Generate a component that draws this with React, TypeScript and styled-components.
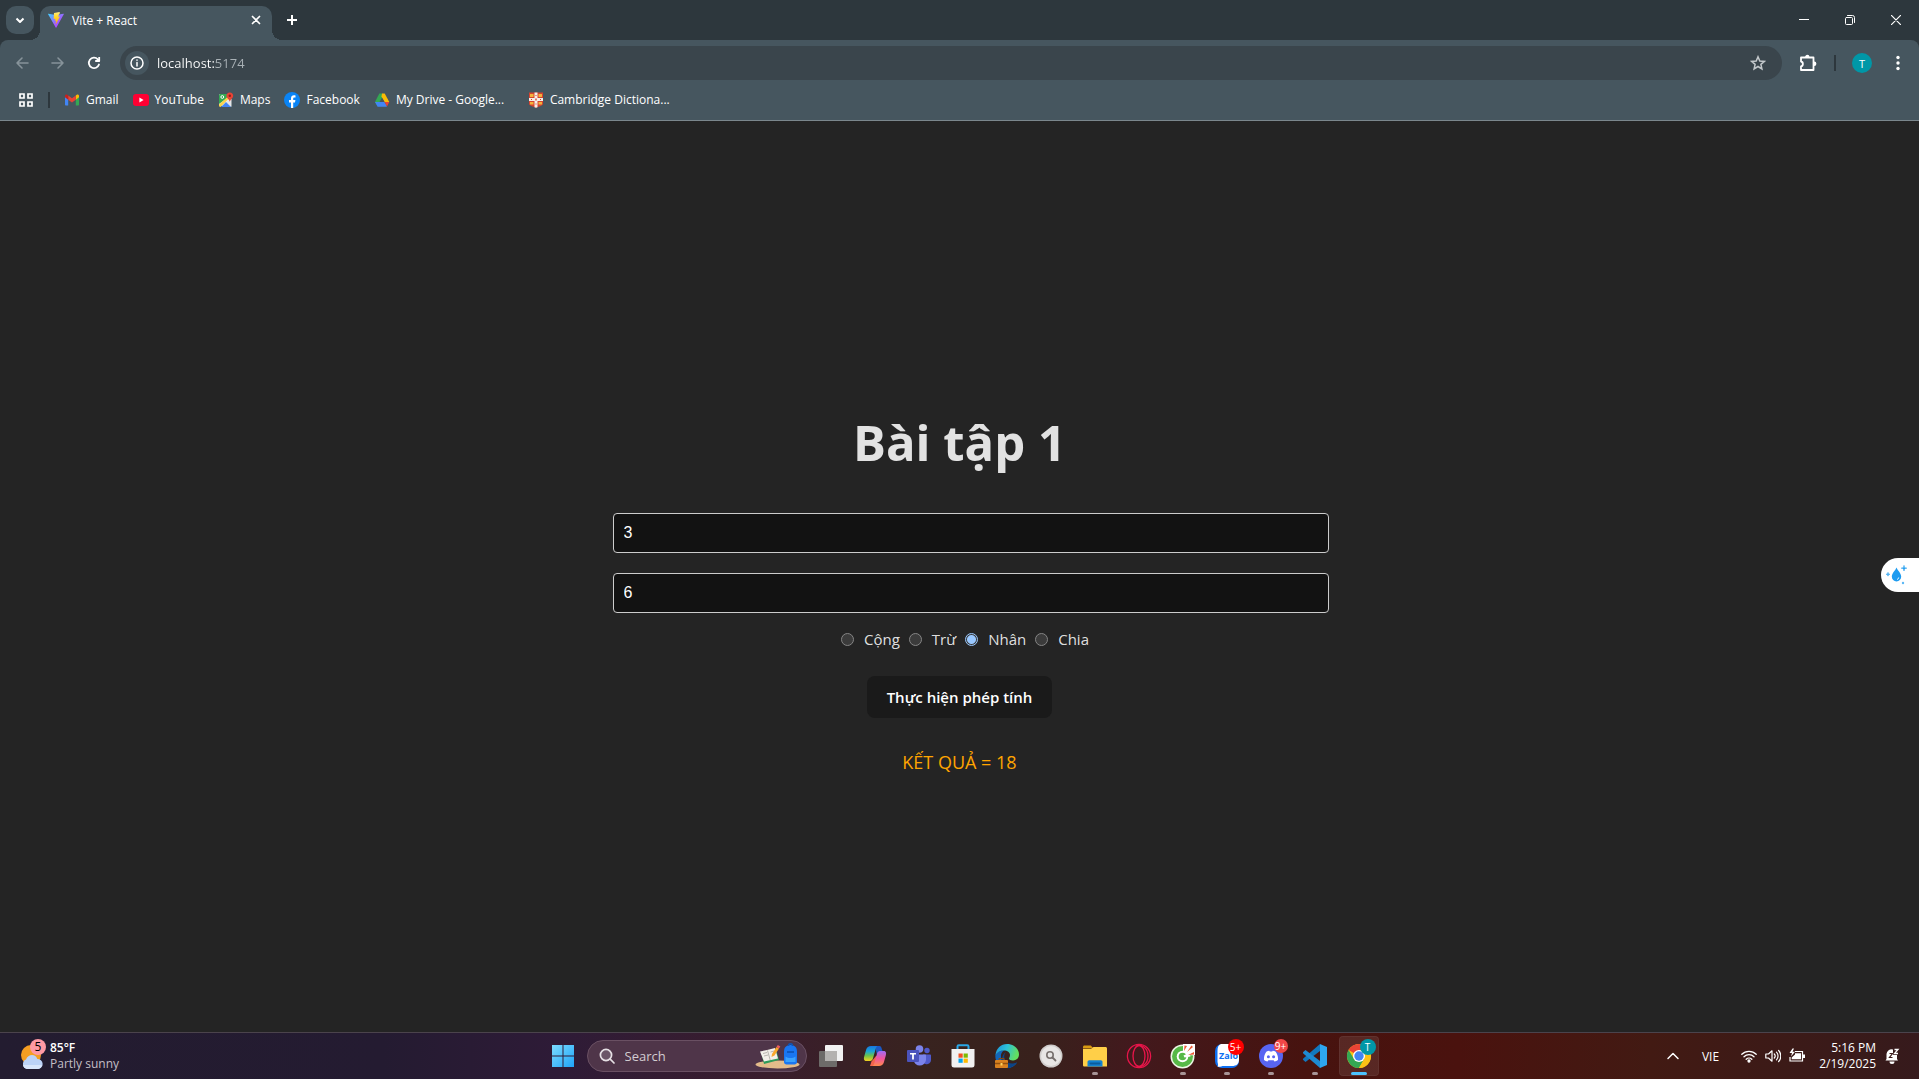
import React, { useState } from "react";
import styled, { createGlobalStyle } from "styled-components";

const GlobalStyle = createGlobalStyle`
  *, *::before, *::after { box-sizing: border-box; }
  html, body { margin: 0; height: 100%; }
  #root { height: 100%; }
  body { background: #242424; font-family: "Open Sans", "Noto Sans", sans-serif; }
  button, input { font-family: inherit; }
  svg { display: block; flex: none; }
`;

const Screen = styled.div`
  display: flex;
  flex-direction: column;
  min-height: 100vh;
  overflow: hidden;
`;

const PlainButton = styled.button`
  display: flex;
  align-items: center;
  justify-content: center;
  padding: 0;
  border: 0;
  background: transparent;
  color: #fff;
`;

/* ---------- browser window ---------- */

const TabStrip = styled.div`
  display: flex;
  align-items: flex-start;
  height: 40px;
  padding: 6px 0 0 6px;
  background: #2d373d;
`;

const TabSearch = styled(PlainButton)`
  width: 28px;
  height: 28px;
  margin-right: 6px;
  border-radius: 10px;
  background: #46565f;
`;

const Tab = styled.div`
  position: relative;
  display: flex;
  align-items: center;
  width: 232px;
  height: 34px;
  padding: 0 8px 6px;
  border-radius: 10px 10px 0 0;
  background: #46565f;
  color: #fff;
  font-size: 12px;
  line-height: 16px;

  &::before,
  &::after {
    content: "";
    position: absolute;
    bottom: 0;
    width: 10px;
    height: 10px;
  }
  &::before {
    left: -10px;
    background: radial-gradient(circle at 0 0, transparent 10px, #46565f 10px);
  }
  &::after {
    right: -10px;
    background: radial-gradient(circle at 100% 0, transparent 10px, #46565f 10px);
  }
`;

const TabTitle = styled.span`
  flex: 1;
  margin-left: 8px;
  padding-top: 2px;
`;

const TabClose = styled(PlainButton)`
  width: 16px;
  height: 16px;
`;

const NewTab = styled(PlainButton)`
  width: 28px;
  height: 28px;
  margin-left: 6px;
`;

const WindowControls = styled.div`
  display: flex;
  margin-left: auto;
`;

const WindowButton = styled(PlainButton)`
  width: 46px;
  height: 28px;
`;

const ToolbarBack = styled.div`
  background: #2d373d;
`;

const Toolbar = styled.div`
  display: flex;
  align-items: center;
  height: 46px;
  padding: 0 3px 0 4px;
  border-radius: 8px 8px 0 0;
  background: #46565f;
`;

const ToolButton = styled(PlainButton)<{ $dim?: boolean }>`
  width: 36px;
  height: 34px;
  color: ${(p) => (p.$dim ? "#87939a" : "#fff")};
`;

const AddressBar = styled.div`
  display: flex;
  align-items: center;
  flex: 1;
  height: 34px;
  margin: 0 8px;
  padding: 0 16px 0 5px;
  border-radius: 17px;
  background: #3a454c;
`;

const SiteInfo = styled(PlainButton)`
  width: 24px;
  height: 24px;
  border-radius: 12px;
  background: #46565f;
`;

const AddressInput = styled.input`
  flex: 1;
  height: 24px;
  margin: 0 8px;
  padding: 0;
  border: 0;
  outline: 0;
  background: linear-gradient(90deg, #fff 59px, #a9b1b6 59px);
  background-clip: text;
  -webkit-background-clip: text;
  color: transparent;
  font-size: 13px;
`;

const Divider = styled.span`
  width: 2px;
  height: 16px;
  background: #2d373d;
`;

const ProfileArea = styled.div`
  display: flex;
  align-items: center;
  gap: 16px;
  margin: 0 8px;
`;

const Avatar = styled(PlainButton)`
  width: 20px;
  height: 20px;
  border-radius: 10px;
  background: #0097a7;
  font-size: 11px;
`;

const Bookmarks = styled.nav`
  display: flex;
  align-items: center;
  height: 35px;
  padding: 0 0 6px 18px;
  border-bottom: 1px solid #7b878d;
  background: #46565f;
`;

const AppsButton = styled(PlainButton)`
  width: 16px;
  height: 16px;
  margin-right: 14px;
`;

const BookmarkList = styled.div`
  display: flex;
  gap: 14px;
  margin-left: 14px;
`;

const Bookmark = styled.a<{ $wide?: boolean }>`
  display: flex;
  align-items: center;
  gap: 6px;
  min-width: ${(p) => (p.$wide ? "140px" : "0")};
  color: #fff;
  font-size: 12px;
  line-height: 16px;
  text-decoration: none;
  white-space: nowrap;
`;

/* ---------- page ---------- */

const Page = styled.main`
  position: relative;
  display: flex;
  flex: 1;
  flex-direction: column;
  align-items: center;
  justify-content: center;
  padding-top: 35px;
  background: #242424;
  color: rgba(255, 255, 255, 0.87);
`;

const Title = styled.h1`
  margin: 0 0 43px;
  font-size: 49px;
  line-height: 56px;
  font-weight: 700;
`;

const Form = styled.form`
  display: flex;
  flex-direction: column;
  width: 694px;
  max-width: 90%;
`;

const NumberInput = styled.input`
  box-sizing: content-box;
  width: 100%;
  height: 18px;
  margin: 0 0 20px;
  padding: 10px;
  border: 1px solid #ccc;
  border-radius: 4px;
  outline: 0;
  background: #121212;
  color: #fff;
  font-family: "Liberation Sans", Arial, sans-serif;
  font-size: 16px;
`;

const Operations = styled.fieldset`
  display: flex;
  justify-content: center;
  margin: -6px 0 25px;
  padding: 0 0 0 20px;
  border: 0;
`;

const Operation = styled.label`
  display: flex;
  align-items: center;
  gap: 10px;
  margin-right: 9px;
  font-size: 15px;
  line-height: 24px;
`;

const Radio = styled.input`
  appearance: none;
  width: 13px;
  height: 13px;
  margin: 0;
  border: 1px solid #858585;
  border-radius: 50%;
  background: #3b3b3b;

  &:checked {
    border-color: #99c8ff;
    background: radial-gradient(circle, #99c8ff 4px, #3b3b3b 5px);
  }
`;

const Submit = styled.button`
  align-self: center;
  height: 42px;
  margin-bottom: 32px;
  padding: 0 20px;
  border: 0;
  border-radius: 8px;
  background: #1a1a1a;
  color: #fff;
  font-size: 15px;
  font-weight: 600;
`;

const Result = styled.output`
  align-self: center;
  color: #ffa500;
  font-size: 18px;
  line-height: 24px;
`;

const SideWidget = styled.button`
  position: absolute;
  top: 437px;
  right: 0;
  display: flex;
  align-items: center;
  width: 38px;
  height: 34px;
  padding: 0 0 0 4px;
  border: 0;
  border-radius: 17px 0 0 17px;
  background: #fff;
`;

/* ---------- taskbar ---------- */

const Taskbar = styled.footer`
  display: grid;
  grid-template-columns: 1fr auto 1fr;
  align-items: center;
  height: 47px;
  border-top: 1px solid #4b434c;
  background: linear-gradient(
    90deg,
    #231c30 0%,
    #241b31 20%,
    #2e1b37 29%,
    #3a1d2d 40%,
    #38231f 48%,
    #38211c 54%,
    #42191d 59%,
    #47130f 68%,
    #4a120e 76%,
    #421a13 86%,
    #361a1c 100%
  );
  color: #fff;
  font-size: 12px;
  line-height: 16px;
`;

const Weather = styled(PlainButton)`
  justify-self: start;
  gap: 5px;
  padding-left: 20px;
  font-size: 12px;
  line-height: 16px;
  text-align: left;
`;

const WeatherIcon = styled.span`
  position: relative;
  width: 25px;
  height: 32px;
`;

const WeatherBadge = styled.span`
  position: absolute;
  top: -1px;
  right: -1px;
  width: 16px;
  height: 16px;
  border-radius: 8px;
  background: #ff99a4;
  color: #000;
  text-align: center;
`;

const Temperature = styled.span`
  font-weight: 600;
`;

const Muted = styled.span`
  color: #c3bfc6;
`;

const Apps = styled.div`
  display: flex;
  align-items: center;
  padding-left: 2px;
`;

const SearchBox = styled.label`
  display: flex;
  align-items: center;
  width: 220px;
  height: 32px;
  margin: 0 2px;
  padding: 0 6px 0 11px;
  border: 1px solid #6a5063;
  border-radius: 16px;
  background: #4f3549;
`;

const SearchInput = styled.input`
  flex: 1;
  width: 0;
  margin-left: 10px;
  padding: 0;
  border: 0;
  outline: 0;
  background: transparent;
  color: #fff;
  font-size: 13px;

  &::placeholder {
    color: #d3ccd1;
    opacity: 1;
  }
`;

const AppButton = styled(PlainButton)<{ $active?: boolean; $running?: boolean }>`
  position: relative;
  width: 40px;
  height: 40px;
  margin: 0 2px;
  border-radius: 4px;
  background: ${(p) => (p.$active ? "rgba(255,255,255,0.09)" : "transparent")};
  box-shadow: ${(p) => (p.$active ? "inset 0 0 0 1px rgba(255,255,255,0.05)" : "none")};

  &::after {
    content: "";
    display: ${(p) => (p.$active || p.$running ? "block" : "none")};
    position: absolute;
    bottom: 1px;
    left: 50%;
    width: ${(p) => (p.$active ? "16px" : "6px")};
    height: 3px;
    border-radius: 2px;
    background: ${(p) => (p.$active ? "#4cc2ff" : "#a89496")};
    transform: translateX(-50%);
  }
`;

const AppBadge = styled.span<{ $color: string; $size: number }>`
  position: absolute;
  top: 3px;
  right: 3px;
  width: ${(p) => p.$size}px;
  height: ${(p) => p.$size}px;
  border-radius: 50%;
  background: ${(p) => p.$color};
  color: #fff;
  font-size: 10px;
  line-height: ${(p) => p.$size}px;
  text-align: center;
`;

const Tray = styled.div`
  display: flex;
  align-items: center;
  justify-self: end;
  padding-right: 19px;
`;

const Language = styled(PlainButton)`
  margin: 0 22px;
  font-size: 12px;
`;

const TrayStatus = styled(PlainButton)`
  gap: 8px;
`;

const Clock = styled.time`
  margin: 0 8px 0 14px;
  text-align: right;
  white-space: pre-line;
`;

/* ---------- small drawings ---------- */

const line = {
  fill: "none",
  stroke: "currentColor",
  strokeLinecap: "round" as const,
  strokeLinejoin: "round" as const,
};

const ViteLogo = () => (
  <svg width="16" height="16" viewBox="0 0 16 16">
    <defs>
      <linearGradient id="viteA" x1="0" y1="0" x2="1" y2="1">
        <stop offset="0" stopColor="#41d1ff" />
        <stop offset="0.6" stopColor="#a259ff" />
        <stop offset="1" stopColor="#bd34fe" />
      </linearGradient>
      <linearGradient id="viteB" x1="0" y1="0" x2="0" y2="1">
        <stop offset="0" stopColor="#ffea83" />
        <stop offset="0.3" stopColor="#ffdd35" />
        <stop offset="1" stopColor="#ffa800" />
      </linearGradient>
    </defs>
    <path d="M15.8 2.3 8.4 15.5c-.2.3-.6.3-.7 0L.1 2.3c-.2-.3.1-.6.4-.6L8 3l7.400-1.300c.3 0 .6.3.4.6Z" fill="url(#viteA)" />
    <path d="m11.500.1-5.500 1-.3 5.900 1.700-.3-.5 2.300 1.300-.4-.6 3.400c0 .3.300.3.400.1l3.900-7.500-1.700.2.900-3 1.100-.4Z" fill="url(#viteB)" />
  </svg>
);

const GmailLogo = () => (
  <svg width="16" height="16" viewBox="0 0 16 16">
    <path d="M1 4.500v8.300c0 .4.300.7.800.7h2.400V7.300L1 4.500Z" fill="#4285f4" />
    <path d="M15 4.500v8.300c0 .4-.300.7-.8.7h-2.400V7.300L15 4.500Z" fill="#34a853" />
    <path d="M11.800 3.400v4.300L15 5.300V4c0-1.300-1.300-1.900-2.300-1.200l-.9.600Z" fill="#fbbc04" />
    <path d="M4.200 7.700V3.400L8 6.300l3.800-2.900v4.300L8 10.600 4.200 7.700Z" fill="#ea4335" />
    <path d="M1 4v1.300l3.200 2.400V3.400l-.9-.6C2.300 2.100 1 2.700 1 4Z" fill="#c5221f" />
  </svg>
);

const YouTubeLogo = () => (
  <svg width="16" height="16" viewBox="0 0 16 16">
    <rect y="2" width="16" height="12" rx="3" fill="#ff0033" />
    <path d="m6.400 5.500 4.200 2.500-4.200 2.500Z" fill="#fff" />
  </svg>
);

const MapsLogo = () => (
  <svg width="16" height="16" viewBox="0 0 16 16">
    <path d="M1 13.500V3.500C1 2.600 1.600 2 2.500 2H10l3 5v6.500c0 .9-.6 1.500-1.500 1.500Z" fill="#f1f1f1" />
    <path d="M1 12V3.500C1 2.600 1.600 2 2.500 2h7l.5 3.500Z" fill="#34a853" />
    <path d="M1 12.500 10 4.500l1.500 1.500L2.500 15C1.600 15 1 14.400 1 13.500Z" fill="#fbd34b" />
    <path d="M13.500 7v7c0 .6-.2 1-.6 1L8.500 10.300 12 7Z" fill="#e4e6e8" />
    <path d="m3 15 5-5 5 5Z" fill="#4285f4" />
    <circle cx="4.300" cy="5" r="1.400" fill="none" stroke="#fff" />
    <path d="M11.800.5c2 0 3.400 1.500 3.400 3.300 0 2.300-2.600 3.200-3.400 6-.8-2.800-3.400-3.700-3.400-6C8.400 2 9.800.5 11.800.5Z" fill="#ea4335" />
    <circle cx="11.800" cy="3.800" r="1.200" fill="#8c1d18" />
  </svg>
);

const FacebookLogo = () => (
  <svg width="16" height="16" viewBox="0 0 16 16">
    <circle cx="8" cy="8" r="8" fill="#0a84f5" />
    <path d="M7 16v-5.500H5V8h2V6.500C7 4.300 8.200 3.200 10 3.200c.6 0 1.200.1 1.500.2v2h-1c-1 0-1.300.5-1.300 1.200V8h2.200l-.4 2.500H9.200V16Z" fill="#fff" />
  </svg>
);

const DriveLogo = () => (
  <svg width="16" height="16" viewBox="0 0 16 16">
    <path d="M5.300 1.500h2.900L10 4.800 3.500 14.500 1 10Z" fill="#34a853" />
    <path d="M8 1.500h2.700L15.300 10h-4.800L7.500 4.500Z" fill="#fbbc04" />
    <path d="M1 10h4.500l7.500 4.500H3.500Z" fill="#4285f4" />
    <path d="M5.500 10h5L13 14.500H3.500Z" fill="#4285f4" />
    <path d="M10.500 10h4.800l-2.300 4.500Z" fill="#ea4335" />
    <path d="m8 5.800 2.500 4.200h-5Z" fill="#46565f" />
  </svg>
);

const CambridgeLogo = () => (
  <svg width="16" height="16" viewBox="0 0 16 16">
    <path d="M1 .5h14v11.500c0 1.500-4 2.500-7 3.800-3-1.300-7-2.300-7-3.800Z" fill="#d6432f" />
    <path d="M2 2h3.500v3H2ZM10.500 2H14v3h-3.500ZM2 10h3.500v2.500H2ZM10.500 10H14v2.500h-3.500Z" fill="#f3b33c" />
    <path d="M6.500.5h3V6H15v3H9.500v6.200L8 15.800l-1.500-.6V9H1V6h5.500Z" fill="#f5efe9" />
    <path d="M7.300 6.600h1.400v1.800H7.300ZM3 7h1v1H3ZM12 7h1v1h-1ZM7.500 3h1v1h-1ZM7.500 11.500h1v1h-1Z" fill="#d6432f" />
  </svg>
);

const StartIcon = () => (
  <svg width="24" height="24" viewBox="0 0 24 24">
    <defs>
      <linearGradient id="win" x1="0" y1="0" x2="1" y2="1" gradientUnits="objectBoundingBox">
        <stop offset="0" stopColor="#7cdcff" />
        <stop offset="1" stopColor="#1fa4f8" />
      </linearGradient>
    </defs>
    <path d="M1 1h10.500v10.500H1ZM12.500 1H23v10.500H12.500ZM1 12.500h10.500V23H1ZM12.500 12.500H23V23H12.500Z" fill="url(#win)" />
  </svg>
);

const SchoolArt = () => (
  <svg width="45" height="26" viewBox="0 0 45 26">
    <ellipse cx="22.500" cy="21.500" rx="22" ry="4" fill="#e3bb8a" />
    <path d="m6 9 15-3 3 11-15 4Z" fill="#2e9b59" />
    <path d="M5 8.500 12 7l8-2 3 10.500-7 1.500-7 1.500Z" fill="#f4f0ea" />
    <path d="m12.500 7.500 2.700 9.500M8 10.500l4-1M9 13l4-1M15.500 9l3.500-1" stroke="#b9b6b0" fill="none" />
    <path d="m17 11 4.500-7 2.500 1.500-4.500 7-3 1.500Z" fill="#f9a72b" />
    <path d="m21.500 4 1.300-2 2.500 1.600L24 5.500Z" fill="#ef5d5d" />
    <path d="M29 9c0-5 2.500-7 6.500-7s6.500 2 6.500 7v10c0 1.500-1 2.500-2.500 2.500h-8c-1.500 0-2.500-1-2.500-2.500Z" fill="#1976f2" />
    <path d="M33.500 3c0-3 4-3 4 0" fill="none" stroke="#0d55b8" strokeWidth="1.500" />
    <path d="M30.500 13.500c3 2 7 2 10 0V19h-10Z" fill="#39a2ff" />
    <path d="M32 9h7" stroke="#0b4fb0" strokeWidth="1.500" />
  </svg>
);

const TaskViewIcon = () => (
  <svg width="26" height="24" viewBox="0 0 26 24">
    <rect x="7" y="1" width="18" height="16" rx="1" fill="#f2f2f2" />
    <rect x="1" y="7" width="18" height="16" rx="1" fill="#6d6b69" />
    <path d="M7 7h12v10H7Z" fill="#b4b2b0" />
  </svg>
);

const CopilotIcon = () => (
  <svg width="24" height="24" viewBox="0 0 24 24">
    <defs>
      <linearGradient id="copA" x1="0" y1="0" x2="0" y2="1">
        <stop offset="0" stopColor="#1976e0" />
        <stop offset="0.35" stopColor="#18a5d8" />
        <stop offset="0.65" stopColor="#6cc24a" />
        <stop offset="1" stopColor="#f5d21f" />
      </linearGradient>
      <linearGradient id="copB" x1="0" y1="0" x2="0" y2="1">
        <stop offset="0" stopColor="#a06bf5" />
        <stop offset="0.5" stopColor="#f0559e" />
        <stop offset="1" stopColor="#ff8a4a" />
      </linearGradient>
    </defs>
    <path d="M8.500 17.500 7 22h6.500c2 0 2.800-1.500 3.500-3.500L19 11l-6 1Z" fill="#f2644c" />
    <path d="M12 2h4.500c1.300 0 1.800 1 2.200 2.500l1 3L14 11Z" fill="#1b58c4" />
    <path d="M8 2h6.500c-1 .7-1.500 1.500-2 3.500l-2.500 8.800c-.5 1.700-1.400 2.700-3 2.700H3.500C1 17 .5 15 1.200 12.500l2-7C3.900 3.200 5.500 2 8 2Z" fill="url(#copA)" />
    <path d="M16 22H9.500c1-.7 1.500-1.500 2-3.500L14 9.700C14.500 8 15.400 7 17 7h3.500c2.500 0 3 2 2.300 4.500l-2 7c-.7 2.300-2.300 3.500-4.800 3.500Z" fill="url(#copB)" />
  </svg>
);

const TeamsIcon = () => (
  <svg width="24" height="24" viewBox="0 0 24 24">
    <circle cx="20" cy="6.500" r="2.700" fill="#5059c9" />
    <path d="M16 10.500h7c.6 0 1 .4 1 1v4.500a4.500 4.500 0 0 1-8 2.500Z" fill="#5059c9" />
    <circle cx="12.500" cy="5" r="3.800" fill="#7b83eb" />
    <path d="M6.500 10.500h11.500c.6 0 1 .4 1 1V16a6.300 6.300 0 0 1-12.500 0Z" fill="#7b83eb" />
    <rect y="6" width="12" height="12" rx="1" fill="#4b53bc" />
    <path d="M3 9h6v1.600H6.900V15.500H5.100V10.600H3Z" fill="#fff" />
  </svg>
);

const StoreIcon = () => (
  <svg width="24" height="24" viewBox="0 0 24 24">
    <path d="M6.500 6V2.500c0-.8.500-1.300 1.300-1.300h8.400c.8 0 1.300.5 1.300 1.300V6" fill="none" stroke="#2aa8e8" strokeWidth="2" />
    <path d="M.5 5h23v16c0 1.700-1 2.500-2.500 2.500H3C1.500 23.500.5 22.700.5 21Z" fill="#f1f1f1" />
    <path d="M7.500 9.500h4.200v4.200H7.500Z" fill="#f25022" />
    <path d="M12.600 9.500h4.200v4.200h-4.200Z" fill="#7fba00" />
    <path d="M7.500 14.600h4.200v4.200H7.500Z" fill="#00a4ef" />
    <path d="M12.600 14.600h4.200v4.200h-4.200Z" fill="#ffb900" />
  </svg>
);

const EdgeIcon = () => (
  <svg width="26" height="26" viewBox="0 0 26 26">
    <defs>
      <linearGradient id="edge" x1="0" y1="0" x2="1" y2="0.300">
        <stop offset="0" stopColor="#1c8fd8" />
        <stop offset="0.500" stopColor="#2cc0d8" />
        <stop offset="1" stopColor="#63e05f" />
      </linearGradient>
    </defs>
    <path d="M1.300 13c0-3 3.500-5.500 8.700-5.500-2.500 1.500-3.500 4-3 7 .7 4.500 4.500 7 9 7 3 0 5-1 7-2-2 3.500-5.500 5.500-10 5.500-6.500 0-11.700-5-11.700-12Z" fill="#1266b8" />
    <path d="M12 9c-2 2-2.500 5.500-.5 8.500 2.300 3.200 7 3.900 11.500 2-2 3.500-5.500 5.500-10 5.500C9 23 7 18 8.500 13.500 9.200 11.500 10.500 9.800 12 9Z" fill="#0c4486" />
    <path d="M1.500 12C2 5.500 7 1 13 1c7 0 12 5 12 10.500 0 4-3 6-6 6-2.500 0-4-1-4-2 0-.8 1-1.300 1-3.500 0-2.500-2.500-4.500-6-4.500-4 0-7 2-8.500 4.500Z" fill="url(#edge)" />
    <rect x="1" y="17" width="13" height="8" rx="1" fill="#d9811f" />
    <path d="M5 17v-1.500h5V17" fill="none" stroke="#8a4a10" />
    <path d="M1 20.500h13" stroke="#93500f" strokeWidth="1.500" />
    <rect x="6.500" y="20" width="2" height="2.500" fill="#ffd25e" />
  </svg>
);

const FinderIcon = () => (
  <svg width="24" height="24" viewBox="0 0 24 24">
    <circle cx="12" cy="12" r="11.500" fill="#cfcccb" />
    <circle cx="12" cy="12" r="10" fill="#e8e6e5" />
    <circle cx="11" cy="11" r="3.200" fill="none" stroke="#77706e" strokeWidth="1.600" />
    <path d="m13.500 13.500 3 3" stroke="#77706e" strokeWidth="1.800" strokeLinecap="round" />
  </svg>
);

const ExplorerIcon = () => (
  <svg width="24" height="24" viewBox="0 0 24 24">
    <path d="M0 3c0-.8.500-1.500 1.500-1.500h6.300l2.700 3H0Z" fill="#d99a12" />
    <path d="M0 5h8l2.500-2h12c.9 0 1.500.6 1.500 1.500V22.500H1.500C.6 22.500 0 22 0 21Z" fill="#ffcf48" />
    <path d="M4.500 22.500V18c0-1 .8-1.700 1.700-1.700h11.600c1 0 1.700.7 1.700 1.700v4.500Z" fill="#1382d0" />
    <path d="M7.500 19.500h9" stroke="#0b5c9c" strokeWidth="2" strokeLinecap="round" />
  </svg>
);

const OperaIcon = () => (
  <svg width="26" height="26" viewBox="0 0 26 26">
    <g fill="none" stroke="#e8154a" strokeWidth="1.300">
      <circle cx="13" cy="13" r="11.600" />
      <ellipse cx="13" cy="13" rx="6" ry="10.500" />
      <path d="M10 3.500C15 .5 22 4.500 22 13s-7 12.500-12 9.500" />
    </g>
  </svg>
);

const CocCocIcon = () => (
  <svg width="26" height="26" viewBox="0 0 26 26">
    <circle cx="12.500" cy="13.500" r="12" fill="#eef7e6" />
    <circle cx="12.500" cy="13.500" r="10.500" fill="#57b947" />
    <path d="M13 13 13 1h12v11Z" fill="#fff" />
    <circle cx="12.500" cy="13.500" r="5.800" fill="#fff" />
    <circle cx="12.500" cy="13.500" r="3.800" fill="#57b947" />
    <path d="M13.500 12.500 19 10l1.500 3.500-6 1Z" fill="#fff" />
    <path d="m14 8 .5-5.500L17 3ZM17 9l4.500-6.500L23 4ZM18 12l6-3v2.500Z" fill="#ef5a35" />
  </svg>
);

const ZaloIcon = () => (
  <svg width="26" height="26" viewBox="0 0 26 26">
    <rect x="1" y="1" width="24" height="24" rx="7" fill="#0d6ff2" />
    <path d="M7 1h11c4.500 0 7 2.500 7 7v8.500c0 4.500-2.500 6.500-7 6.500H9.500c-1.500 0-3.500 1-6 .7C4.500 22.500 4 21 3.500 19V7.500C3.500 4 4.500 2 7 1Z" fill="#fff" />
    <text x="5" y="16" fontFamily="Open Sans, sans-serif" fontSize="9" fontWeight="700" fill="#0d6ff2">Zalo</text>
  </svg>
);

const DiscordIcon = () => (
  <svg width="26" height="26" viewBox="0 0 26 26">
    <circle cx="13" cy="13" r="12" fill="#5865f2" />
    <path d="M8.300 8.700c1-.6 2-.9 3-1l.5.900h2.400l.5-.9c1 .1 2 .4 3 1 1.800 2.600 2.500 5.300 2.300 8.200-1.100.9-2.200 1.400-3.500 1.700l-.9-1.400H10.400l-.9 1.400c-1.300-.3-2.400-.8-3.500-1.700-.2-2.900.5-5.600 2.300-8.200Z" fill="#fff" />
    <circle cx="10.400" cy="13.700" r="1.500" fill="#5865f2" />
    <circle cx="15.600" cy="13.700" r="1.500" fill="#5865f2" />
  </svg>
);

const VsCodeIcon = () => (
  <svg width="26" height="26" viewBox="0 0 26 26">
    <path d="M18 1v7L3.500 19 1 16.800v-1Z" fill="#1278be" />
    <path d="M18 25v-7L3.500 7 1 9.200v1Z" fill="#1d8ad2" />
    <path d="M18 1l7 3v18l-7 3Z" fill="#2ea6f0" />
  </svg>
);

const ChromeIcon = () => (
  <svg width="26" height="26" viewBox="0 0 26 26">
    <circle cx="13" cy="13" r="12" fill="#fbc116" />
    <path d="M13 13 2.600 7A12 12 0 0 1 23.400 7Z" fill="#ea4335" />
    <path d="M2.600 7A12 12 0 0 0 13 25l5.200-9-5.200-3-5 3Z" fill="#34a853" />
    <path d="M13 7h10.400A12 12 0 0 1 13 25l5.200-9Z" fill="#fbc116" />
    <circle cx="13" cy="13" r="6" fill="#fff" />
    <circle cx="13" cy="13" r="4.700" fill="#4285f4" />
  </svg>
);

const runningApps = [
  { name: "Task View", icon: <TaskViewIcon /> },
  { name: "Copilot", icon: <CopilotIcon /> },
  { name: "Teams", icon: <TeamsIcon /> },
  { name: "Microsoft Store", icon: <StoreIcon /> },
  { name: "Edge", icon: <EdgeIcon /> },
  { name: "Finder", icon: <FinderIcon /> },
  { name: "File Explorer", icon: <ExplorerIcon />, running: true },
  { name: "Opera", icon: <OperaIcon /> },
  { name: "Coc Coc", icon: <CocCocIcon />, running: true },
  { name: "Zalo", icon: <ZaloIcon />, running: true, badge: "5+", color: "#ff0000", size: 16 },
  { name: "Discord", icon: <DiscordIcon />, running: true, badge: "9+", color: "#f04747", size: 14 },
  { name: "Visual Studio Code", icon: <VsCodeIcon />, running: true },
  { name: "Chrome", icon: <ChromeIcon />, active: true, badge: "T", color: "#0097a7", size: 16 },
];

const bookmarks = [
  { name: "Gmail", icon: <GmailLogo /> },
  { name: "YouTube", icon: <YouTubeLogo /> },
  { name: "Maps", icon: <MapsLogo /> },
  { name: "Facebook", icon: <FacebookLogo /> },
  { name: "My Drive - Google...", icon: <DriveLogo />, wide: true },
  { name: "Cambridge Dictiona...", icon: <CambridgeLogo />, wide: true },
];

const operations: { name: string; run: (a: number, b: number) => number }[] = [
  { name: "Cộng", run: (a, b) => a + b },
  { name: "Trừ", run: (a, b) => a - b },
  { name: "Nhân", run: (a, b) => a * b },
  { name: "Chia", run: (a, b) => a / b },
];

function Browser() {
  const [address, setAddress] = useState("localhost:5174");
  return (
    <header>
      <TabStrip>
        <TabSearch aria-label="Search tabs">
          <svg width="10" height="10" viewBox="0 0 10 10" {...line} strokeWidth="2" strokeLinecap="butt">
            <path d="m1.500 3.500 3.500 3.500 3.500-3.500" />
          </svg>
        </TabSearch>
        <Tab>
          <ViteLogo />
          <TabTitle>Vite + React</TabTitle>
          <TabClose aria-label="Close tab">
            <svg width="10" height="10" viewBox="0 0 10 10" {...line} strokeWidth="1.700">
              <path d="m1.500 1.500 7 7m0-7-7 7" />
            </svg>
          </TabClose>
        </Tab>
        <NewTab aria-label="New tab">
          <svg width="12" height="12" viewBox="0 0 12 12" {...line} strokeWidth="2" strokeLinecap="butt">
            <path d="M6 1v10M1 6h10" />
          </svg>
        </NewTab>
        <WindowControls>
          <WindowButton aria-label="Minimize">
            <svg width="10" height="10" viewBox="0 0 10 10" {...line}>
              <path d="M0 4.500h10" />
            </svg>
          </WindowButton>
          <WindowButton aria-label="Restore">
            <svg width="10" height="10" viewBox="0 0 10 10" {...line}>
              <rect x="0.500" y="2.500" width="7" height="7" rx="1" />
              <path d="M2.500.5h5a2 2 0 0 1 2 2v5" />
            </svg>
          </WindowButton>
          <WindowButton aria-label="Close">
            <svg width="10" height="10" viewBox="0 0 10 10" {...line} strokeWidth="1.200">
              <path d="m0 0 10 10M10 0 0 10" />
            </svg>
          </WindowButton>
        </WindowControls>
      </TabStrip>
      <ToolbarBack>
        <Toolbar>
          <ToolButton $dim aria-label="Back">
            <svg width="16" height="16" viewBox="0 0 16 16" {...line} strokeWidth="1.600">
              <path d="M14 8H3m5-5L3 8l5 5" />
            </svg>
          </ToolButton>
          <ToolButton $dim aria-label="Forward">
            <svg width="16" height="16" viewBox="0 0 16 16" {...line} strokeWidth="1.600">
              <path d="M2 8h11M8 3l5 5-5 5" />
            </svg>
          </ToolButton>
          <ToolButton aria-label="Reload">
            <svg width="16" height="16" viewBox="0 0 16 16" {...line} strokeWidth="1.800">
              <path d="M13 9.500A5.200 5.200 0 1 1 11.800 4.300L13 5.500" />
              <path d="M13.200 2v4h-4" strokeLinecap="butt" />
            </svg>
          </ToolButton>
          <AddressBar>
            <SiteInfo aria-label="Site information">
              <svg width="14" height="14" viewBox="0 0 14 14" {...line} strokeWidth="1.500">
                <circle cx="7" cy="7" r="6" />
                <path d="M7 6.500v3.500M7 4v.2" />
              </svg>
            </SiteInfo>
            <AddressInput aria-label="Address" value={address} onChange={(e) => setAddress(e.target.value)} />
            <PlainButton aria-label="Bookmark this page">
              <svg width="16" height="16" viewBox="0 0 16 16" fill="none" stroke="#c3c8cb" strokeWidth="1.500">
                <path d="m8 1.800 1.800 4.200 4.600.4-3.500 3 1 4.500L8 11.500l-3.900 2.400 1-4.500-3.500-3 4.600-.4Z" />
              </svg>
            </PlainButton>
          </AddressBar>
          <ToolButton aria-label="Extensions">
            <svg width="18" height="18" viewBox="0 0 18 18" {...line} strokeWidth="1.800">
              <path d="M2 3.500h12.500V16H2v-3.500c2.500-.5 2.500-4.500 0-5Z" />
              <path d="M7 3a1.300 1.300 0 0 1 2.600 0ZM15.200 8.500a1.300 1.300 0 0 1 0 2.600Z" />
            </svg>
          </ToolButton>
          <ProfileArea>
            <Divider />
            <Avatar aria-label="Profile">T</Avatar>
          </ProfileArea>
          <ToolButton aria-label="Menu">
            <svg width="4" height="16" viewBox="0 0 4 16" fill="#fff">
              <circle cx="2" cy="2.500" r="1.700" />
              <circle cx="2" cy="8" r="1.700" />
              <circle cx="2" cy="13.500" r="1.700" />
            </svg>
          </ToolButton>
        </Toolbar>
      </ToolbarBack>
      <Bookmarks>
        <AppsButton aria-label="Apps">
          <svg width="16" height="16" viewBox="0 0 16 16" fill="none" stroke="#fff" strokeWidth="1.700">
            <path d="M2 2h4v4H2ZM10 2h4v4h-4ZM2 10h4v4H2ZM10 10h4v4h-4Z" />
          </svg>
        </AppsButton>
        <Divider />
        <BookmarkList>
          {bookmarks.map((b) => (
            <Bookmark key={b.name} href="#" $wide={b.wide}>
              {b.icon}
              {b.name}
            </Bookmark>
          ))}
        </BookmarkList>
      </Bookmarks>
    </header>
  );
}

function Calculator() {
  const [a, setA] = useState("3");
  const [b, setB] = useState("6");
  const [op, setOp] = useState("Nhân");
  const [result, setResult] = useState(18);

  const calculate = (e: React.FormEvent) => {
    e.preventDefault();
    const chosen = operations.find((o) => o.name === op);
    if (chosen) setResult(chosen.run(Number(a), Number(b)));
  };

  return (
    <Page>
      <Title>Bài tập 1</Title>
      <Form onSubmit={calculate}>
        <NumberInput aria-label="Số thứ nhất" value={a} onChange={(e) => setA(e.target.value)} />
        <NumberInput aria-label="Số thứ hai" value={b} onChange={(e) => setB(e.target.value)} />
        <Operations aria-label="Phép tính">
          {operations.map((o) => (
            <Operation key={o.name}>
              <Radio type="radio" name="operation" checked={op === o.name} onChange={() => setOp(o.name)} />
              {o.name}
            </Operation>
          ))}
        </Operations>
        <Submit type="submit">Thực hiện phép tính</Submit>
        <Result>KẾT QUẢ = {result}</Result>
      </Form>
      <SideWidget aria-label="Assistant">
        <svg width="24" height="24" viewBox="0 0 24 24" fill="#1d9bf0">
          <path d="M11.500 4.500c1 3 4.700 5.500 4.700 9.300a4.700 4.700 0 0 1-9.400 0c0-3.800 3.700-6.300 4.700-9.300Z" />
          <path d="M19 2.500c.3 2 .7 2.400 2.700 2.700-2 .3-2.400.7-2.700 2.700-.3-2-.7-2.400-2.700-2.700 2-.3 2.400-.7 2.700-2.700Z" stroke="#5bb8f5" />
          <path d="M3 9.500c.2 1.300.5 1.600 1.800 1.800-1.300.2-1.600.5-1.800 1.800-.2-1.300-.5-1.600-1.800-1.800 1.300-.2 1.600-.5 1.800-1.800Z" stroke="#5bb8f5" />
          <circle cx="18" cy="20" r="1.200" fill="#5bb8f5" />
          <path d="M13.700 14.500a2.500 2.500 0 0 1-1.500 2" fill="none" stroke="#fff" />
        </svg>
      </SideWidget>
    </Page>
  );
}

function SystemTaskbar() {
  return (
    <Taskbar>
      <Weather>
        <WeatherIcon>
          <svg width="25" height="32" viewBox="0 0 25 32">
            <circle cx="11" cy="15" r="10" fill="#f59e22" />
            <path d="M7 29a5 5 0 0 1-1-9.500c1-3 3.500-4.500 6-4.500s4.500 1.500 5.300 4A4.800 4.800 0 0 1 18 29Z" fill="#bcd3f7" />
            <path d="M7 29a5 5 0 0 1-4-4h19a5 5 0 0 1-4 4Z" fill="#d8e6fb" />
          </svg>
          <WeatherBadge>5</WeatherBadge>
        </WeatherIcon>
        <span>
          <Temperature>85°F</Temperature>
          <br />
          <Muted>Partly sunny</Muted>
        </span>
      </Weather>
      <Apps>
        <AppButton aria-label="Start">
          <StartIcon />
        </AppButton>
        <SearchBox>
          <svg width="16" height="16" viewBox="0 0 16 16" fill="none" stroke="#e6e0e4" strokeWidth="1.700" strokeLinecap="round">
            <circle cx="7" cy="7" r="5.600" fill="#6b5567" />
            <path d="m11.200 11.200 3.800 3.800" />
          </svg>
          <SearchInput aria-label="Search" placeholder="Search" />
          <SchoolArt />
        </SearchBox>
        {runningApps.map((app) => (
          <AppButton key={app.name} aria-label={app.name} $active={app.active} $running={app.running}>
            {app.icon}
            {app.badge && (
              <AppBadge $color={app.color!} $size={app.size!}>
                {app.badge}
              </AppBadge>
            )}
          </AppButton>
        ))}
      </Apps>
      <Tray>
        <PlainButton aria-label="Show hidden icons">
          <svg width="14" height="14" viewBox="0 0 14 14" {...line} strokeWidth="1.500">
            <path d="m2 9.500 5-5 5 5" />
          </svg>
        </PlainButton>
        <Language>VIE</Language>
        <TrayStatus aria-label="Network, volume and battery">
          <svg width="16" height="16" viewBox="0 0 16 16" {...line} strokeWidth="1.300">
            <path d="M.8 6.300a10.300 10.300 0 0 1 14.400 0M3 8.800a7 7 0 0 1 10 0M5.200 11.200a4 4 0 0 1 5.600 0" />
            <circle cx="8" cy="13" r="1" fill="#fff" />
          </svg>
          <svg width="16" height="16" viewBox="0 0 16 16" {...line} strokeWidth="1.200">
            <path d="M.8 6v4h2.700L7 13.200V2.800L3.500 6ZM9.300 6a3 3 0 0 1 0 4M11.500 4.200a5.500 5.500 0 0 1 0 7.600M13.600 2.500a8 8 0 0 1 0 11" />
          </svg>
          <svg width="16" height="16" viewBox="0 0 16 16">
            <path d="M6 3.500h7.500v9.500H1V9" fill="none" stroke="#fff" strokeWidth="1.200" />
            <path d="M6 5.200h6v6H2.700V9.500L6 6.500ZM14 6.500h2v3.500h-2Z" fill="#fff" />
            <path d="M3.500.5.5 5H3L2 8.500l4-4.800H3.500L5 .5Z" fill="#fff" />
          </svg>
        </TrayStatus>
        <Clock>{"5:16 PM\n2/19/2025"}</Clock>
        <PlainButton aria-label="Notifications">
          <svg width="16" height="16" viewBox="0 0 16 16">
            <path d="M2.500 11V6a5 5 0 0 1 6.500-4.500V7h4v4l1 1.500H1.500ZM5.500 13.500h5a2.500 2.500 0 0 1-5 0Z" fill="#fff" />
            <path d="M5.500 5.500h3l-3 4h3" fill="none" stroke="#3b1b1a" strokeWidth="1.200" />
            <path d="M10.500 1.500H14l-3.500 4H14" fill="none" stroke="#fff" strokeWidth="1.300" />
          </svg>
        </PlainButton>
      </Tray>
    </Taskbar>
  );
}

export default function App() {
  return (
    <Screen>
      <GlobalStyle />
      <Browser />
      <Calculator />
      <SystemTaskbar />
    </Screen>
  );
}
